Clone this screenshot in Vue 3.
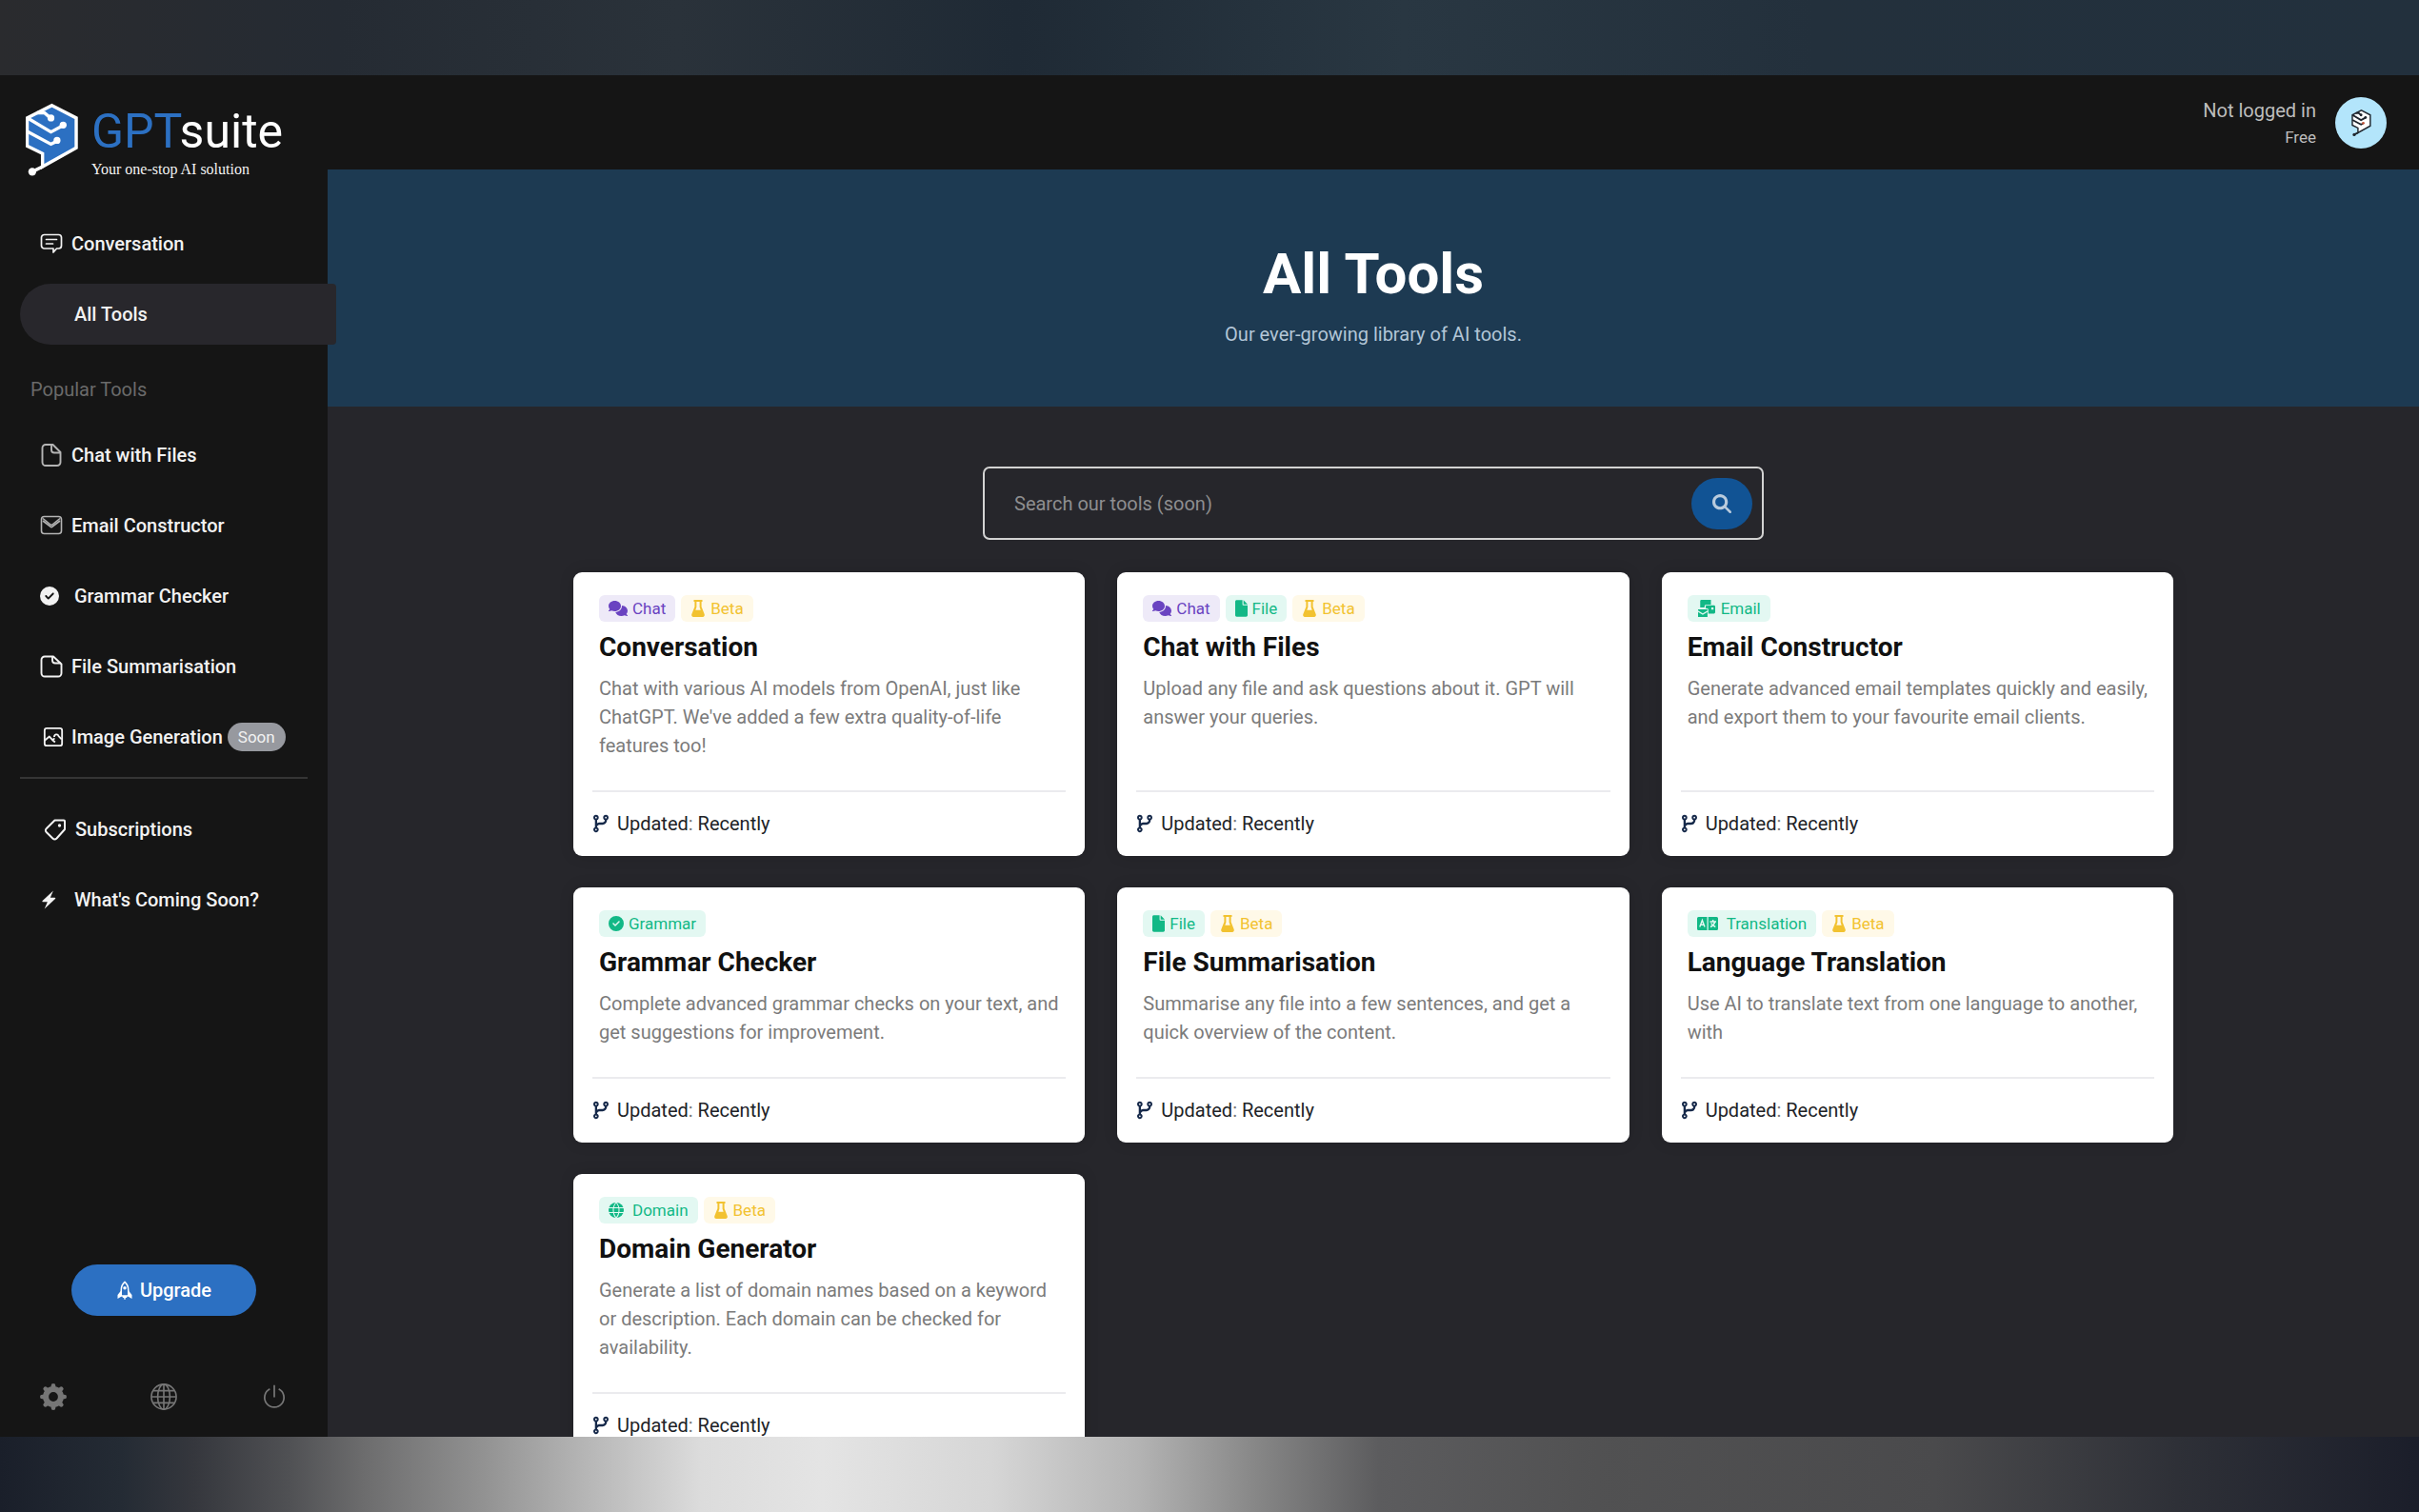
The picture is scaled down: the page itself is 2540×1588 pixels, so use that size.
<script setup>
const icons = {
  chatBubble: {
    box: '0 0 24 24',
    body: '<g fill="none" stroke="currentColor" stroke-width="1.7" stroke-linejoin="round" stroke-linecap="round"><path d="M4.500 2.500h15a3 3 0 0 1 3 3v8.500a3 3 0 0 1-3 3h-2l-3.500 4v-4H4.500a3 3 0 0 1-3-3V5.500a3 3 0 0 1 3-3z"/><path d="M6.500 7.500h11M6.500 12h7"/></g>',
  },
  page: {
    box: '0 0 24 24',
    body: '<g fill="none" stroke="currentColor" stroke-width="1.900" stroke-linejoin="round"><path d="M6 1h7.500l8 8v10.500a3.500 3.500 0 0 1-3.500 3.500H6a3.500 3.500 0 0 1-3.500-3.500v-15A3.500 3.500 0 0 1 6 1z"/><path d="M12 1v5.500a3 3 0 0 0 3 3h6.500"/></g>',
  },
  pageWide: {
    box: '0 0 24 24',
    body: '<g fill="none" stroke="currentColor" stroke-width="1.900" stroke-linejoin="round"><path d="M5 1.500h9l8.500 8V19a3.500 3.500 0 0 1-3.500 3.500H5A3.500 3.500 0 0 1 1.500 19V5A3.500 3.500 0 0 1 5 1.500z"/><path d="M13 1.500v4a3 3 0 0 0 3 3h6"/></g>',
  },
  mail: {
    box: '0 0 24 24',
    body: '<g fill="none" stroke="currentColor" stroke-width="1.600" stroke-linejoin="round"><rect x="1.500" y="2.500" width="21" height="18" rx="3"/><path d="M3 4.500l8 6.500q1 .8 2 0l8-6.500M3 7l8 6.200q1 .8 2 0L21 7"/></g>',
  },
  check: {
    box: '0 0 512 512',
    body: '<path fill="currentColor" d="M256 512A256 256 0 1 0 256 0a256 256 0 1 0 0 512zM369 209L241 337c-9.400 9.400-24.600 9.400-33.900 0l-64-64c-9.400-9.400-9.400-24.600 0-33.900s24.600-9.400 33.900 0l47 47L335 175c9.400-9.400 24.600-9.400 33.900 0s9.400 24.600 0 33.900z"/>',
  },
  image: {
    box: '0 0 24 24',
    body: '<g fill="none" stroke="currentColor" stroke-width="2" stroke-linejoin="round"><rect x="2" y="2" width="20" height="20" rx="2.500"/><path d="M2 16l5.500-4.500 3.500 4 2.500-2"/><path d="M11 15.500l3 2.500M13 12c0-3 4-4 5-1l3.500 3.500"/></g>',
  },
  label: {
    box: '0 0 24 24',
    body: '<path fill="none" stroke="currentColor" stroke-width="2" stroke-linejoin="round" d="M11.500 2.500h9.500a1 1 0 0 1 1 1v8.500L13.500 21.500a3 3 0 0 1-4.200 0L2.700 15a2.600 2.600 0 0 1 0-3.800z"/><circle cx="16.500" cy="8" r="1.700" fill="currentColor"/>',
  },
  bolt: {
    box: '0 0 24 24',
    body: '<path fill="currentColor" d="M15.500.5L2 13.200c-.7.6-.3 1.500.6 1.500h5.600L4.500 23.500 18 10.800c.7-.6.3-1.500-.6-1.500h-5.600z"/>',
  },
  rocket: {
    box: '0 0 24 26',
    body: '<path fill="none" stroke="currentColor" stroke-width="2" stroke-linejoin="round" d="M12 1.500c-4 3.500-5 8-5 11.500v8h10v-8c0-3.500-1-8-5-11.500z"/><path fill="currentColor" d="M6.500 14L2 19.500V25l5-3zM17.500 14l4.500 5.500V25l-5-3zM9 21h6v2.500h-2V26h-2v-2.500H9z"/><circle cx="12" cy="10" r="2.300" fill="currentColor"/>',
  },
  gear: {
    box: '0 0 24 24',
    body: '<circle cx="12" cy="12" r="6.800" fill="none" stroke="currentColor" stroke-width="5.200"/><g stroke="currentColor" stroke-width="4" stroke-linecap="round"><path d="M12 2v2M12 20v2M2 12h2M20 12h2M4.900 4.900l1.500 1.500M17.600 17.600l1.500 1.500M4.900 19.100l1.500-1.500M17.600 6.400l1.500-1.500"/></g>',
  },
  globeLine: {
    box: '0 0 24 24',
    body: '<g fill="none" stroke="currentColor" stroke-width="1.400"><circle cx="12" cy="12" r="11.200"/><ellipse cx="12" cy="12" rx="5.500" ry="11.200"/><path d="M12 1v22M1 12h22M2.600 6.500h18.800M2.600 17.500h18.800"/></g>',
  },
  power: {
    box: '0 0 24 24',
    body: '<path fill="none" stroke="currentColor" stroke-width="1.500" d="M12 1.500v11M8 5a8.700 8.700 0 1 0 8 0"/>',
  },
  search: {
    box: '0 0 512 512',
    body: '<path fill="currentColor" d="M416 208c0 45.900-14.900 88.300-40 122.700L502.600 457.400c12.500 12.500 12.500 32.800 0 45.300s-32.800 12.500-45.300 0L330.700 376c-34.400 25.200-76.800 40-122.700 40C93.100 416 0 322.900 0 208S93.100 0 208 0S416 93.100 416 208zM208 336a128 128 0 1 0 0-256 128 128 0 1 0 0 256z"/>',
  },
  branch: {
    box: '0 0 448 512',
    body: '<path fill="currentColor" d="M80 104a24 24 0 1 0 0-48 24 24 0 1 0 0 48zm80-24c0 32.800-19.700 61-48 73.300v87.800c18.800-10.900 40.700-17.100 64-17.100h96c35.300 0 64-28.700 64-64v-6.700C307.700 141 288 112.800 288 80c0-44.200 35.800-80 80-80s80 35.800 80 80c0 32.800-19.700 61-48 73.300V160c0 70.700-57.300 128-128 128H176c-35.300 0-64 28.700-64 64v6.700c28.300 12.300 48 40.500 48 73.300c0 44.200-35.800 80-80 80s-80-35.800-80-80c0-32.800 19.700-61 48-73.300V352 153.300C19.700 141 0 112.800 0 80C0 35.800 35.800 0 80 0s80 35.800 80 80zm232 0a24 24 0 1 0-48 0 24 24 0 1 0 48 0zM80 456a24 24 0 1 0 0-48 24 24 0 1 0 0 48z"/>',
  },
  comments: {
    box: '0 0 640 512',
    body: '<path fill="currentColor" d="M208 352c114.900 0 208-78.800 208-176S322.900 0 208 0S0 78.800 0 176c0 38.600 14.700 74.300 39.600 103.400c-3.500 9.400-8.700 17.700-14.200 24.700c-4.800 6.200-9.700 11-13.300 14.300c-1.800 1.600-3.300 2.900-4.300 3.700c-.5 .4-.9 .7-1.100 .8l-.2 .2C1 327.200-1.400 334.400 .8 340.900S9.100 352 16 352c21.800 0 43.800-5.600 62.100-12.500c9.200-3.500 17.800-7.400 25.200-11.400C134.100 343.300 169.800 352 208 352zM448 176c0 112.300-99.100 196.900-216.500 207C255.800 457.400 336.400 512 432 512c38.200 0 73.900-8.700 104.700-23.900c7.500 4 16 7.900 25.200 11.400c18.300 6.900 40.300 12.500 62.100 12.500c6.900 0 13.100-4.500 15.200-11.100c2.100-6.600-.2-13.800-5.800-17.900l-.2-.2c-.2-.2-.6-.4-1.100-.8c-1-.8-2.500-2-4.300-3.700c-3.600-3.300-8.500-8.100-13.300-14.300c-5.500-7-10.700-15.400-14.200-24.700c24.900-29 39.600-64.700 39.600-103.400c0-92.800-84.900-168.900-192.600-175.500c.4 5.100 .6 10.300 .6 15.500z"/>',
  },
  flask: {
    box: '0 0 16 20',
    body: '<path fill="currentColor" fill-rule="evenodd" d="M3 0h10v2.200h-1V8l3.400 8.800c.6 1.700-.3 3.200-2 3.200H2.600c-1.700 0-2.600-1.500-2-3.200L4 8V2.200H3zM6.200 2.200V8.500L5 12h6L9.800 8.500V2.200z"/>',
  },
  file: {
    box: '0 0 384 512',
    body: '<path fill="currentColor" d="M0 48C0 20 20 0 48 0H224V128c0 17.700 14.300 32 32 32H384V464c0 28-20 48-48 48H48c-28 0-48-20-48-48V48zm384 80H256V0L384 128z"/>',
  },
  mails: {
    box: '0 0 20 20',
    body: '<path fill="currentColor" d="M4 0h11v5.500H9.500a2 2 0 0 0-2 2v1.500h-5V1.500A1.500 1.500 0 0 1 4 0z"/><path fill="currentColor" fill-rule="evenodd" d="M9 6.500h9.500A1.500 1.500 0 0 1 20 8v6.500a1.500 1.500 0 0 1-1.500 1.500H12v-4.500A1.500 1.500 0 0 0 10.500 10H9zM15.500 9v2.500H18V9z"/><path fill="currentColor" d="M0 11h11v1.500l-5.500 3.200L0 12.500zM0 14.300l5.500 3.200 5.500-3.200V20H0z"/>',
  },
  language: {
    box: '0 0 22 14',
    body: '<path fill="currentColor" fill-rule="evenodd" d="M1.500 0h9v14h-9A1.500 1.500 0 0 1 0 12.500v-11A1.500 1.500 0 0 1 1.500 0zM11.700 0h8.800A1.500 1.500 0 0 1 22 1.500v11a1.500 1.500 0 0 1-1.500 1.500h-8.800z"/><path fill="none" stroke="#e3f8f2" stroke-width="1.400" d="M2.800 10.500l2.600-7 2.600 7M3.800 8.300h3.200M13.500 5h6.500M16.700 3v2M18.700 5c-.6 2.600-2.400 4.600-4.700 5.500M14.700 6.500c.8 1.800 2.400 3.200 4.600 4"/>',
  },
  globe: {
    box: '0 0 20 20',
    body: '<circle cx="10" cy="10" r="10" fill="currentColor"/><path fill="none" stroke="#e3f8f2" stroke-width="1.300" d="M0 7h20M0 13h20M10 0C5 5 5 15 10 20M10 0c5 5 5 15 0 20"/>',
  },
}

const mainNav = [
  { label: 'Conversation', icon: 'chatBubble', kind: 'line' },
  { label: 'All Tools', kind: 'solid', active: true },
]
const popularNav = [
  { label: 'Chat with Files', icon: 'page', kind: 'line soft' },
  { label: 'Email Constructor', icon: 'mail', kind: 'line soft' },
  { label: 'Grammar Checker', icon: 'check', kind: 'solid' },
  { label: 'File Summarisation', icon: 'pageWide', kind: 'line' },
  { label: 'Image Generation', icon: 'image', kind: 'line', badge: 'Soon' },
]
const moreNav = [
  { label: 'Subscriptions', icon: 'label', kind: 'inset' },
  { label: "What's Coming Soon?", icon: 'bolt', kind: 'solid' },
]
const groups = [
  { items: mainNav },
  { title: 'Popular Tools', items: popularNav },
  { divider: true, items: moreNav },
]

const chat = { label: 'Chat', icon: 'comments', tone: 'purple' }
const beta = { label: 'Beta', icon: 'flask', tone: 'yellow' }
const file = { label: 'File', icon: 'file', tone: 'green' }
const tools = [
  { title: 'Conversation', tags: [chat, beta], text: "Chat with various AI models from OpenAI, just like ChatGPT. We've added a few extra quality-of-life features too!" },
  { title: 'Chat with Files', tags: [chat, file, beta], text: 'Upload any file and ask questions about it. GPT will answer your queries.' },
  { title: 'Email Constructor', tags: [{ label: 'Email', icon: 'mails', tone: 'green' }], text: 'Generate advanced email templates quickly and easily, and export them to your favourite email clients.' },
  { title: 'Grammar Checker', tags: [{ label: 'Grammar', icon: 'check', tone: 'green' }], text: 'Complete advanced grammar checks on your text, and get suggestions for improvement.' },
  { title: 'File Summarisation', tags: [file, beta], text: 'Summarise any file into a few sentences, and get a quick overview of the content.' },
  { title: 'Language Translation', tags: [{ label: 'Translation', icon: 'language', tone: 'green' }, beta], text: 'Use AI to translate text from one language to another, with' },
  { title: 'Domain Generator', tags: [{ label: 'Domain', icon: 'globe', tone: 'green' }, beta], text: 'Generate a list of domain names based on a keyword or description. Each domain can be checked for availability.' },
]
</script>

<template>
  <div class="desktop">
    <div class="app">
      <aside class="sidebar">
        <a class="brand" href="#">
          <svg class="brand-mark" viewBox="0 0 56 78" aria-hidden="true">
            <path d="M28 2.500L54 16v32L18 68V54L1.500 46V16z" fill="#2c70c2" stroke="#fff" stroke-width="3.500" />
            <g fill="none" stroke="#fff" stroke-width="3.500">
              <path d="M18 68L7 73.500M12 10.500l8 0 7 6M2 16l25 15 13-7M2 30.500l25 13.500 6-3" />
            </g>
            <g fill="#fff">
              <circle cx="27" cy="16" r="3.700" /><circle cx="40" cy="23.500" r="3.700" />
              <circle cx="33.500" cy="40" r="3.700" /><circle cx="7" cy="73.500" r="4.200" />
            </g>
          </svg>
          <span class="brand-text">
            <span class="brand-name"><b>GPT</b>suite</span>
            <span class="brand-line">Your one-stop AI solution</span>
          </span>
        </a>
        <nav>
          <template v-for="(group, g) in groups" :key="g">
            <h2 v-if="group.title" class="nav-title">{{ group.title }}</h2>
            <hr v-if="group.divider" class="nav-divider" />
            <a v-for="item in group.items" :key="item.label" href="#" class="nav-item" :class="[item.kind, { active: item.active }]">
              <span class="nav-icon" :class="item.icon">
                <svg v-if="item.icon" :viewBox="icons[item.icon].box" aria-hidden="true" v-html="icons[item.icon].body"></svg>
              </span>
              {{ item.label }}
              <span v-if="item.badge" class="badge">{{ item.badge }}</span>
            </a>
          </template>
        </nav>
        <div class="sidebar-foot">
          <button class="upgrade" type="button">
            <svg :viewBox="icons.rocket.box" aria-hidden="true" v-html="icons.rocket.body"></svg>
            Upgrade
          </button>
          <div class="quick">
            <button type="button" aria-label="Settings"><svg :viewBox="icons.gear.box" v-html="icons.gear.body"></svg></button>
            <button type="button" aria-label="Language"><svg :viewBox="icons.globeLine.box" v-html="icons.globeLine.body"></svg></button>
            <button type="button" aria-label="Log out"><svg :viewBox="icons.power.box" v-html="icons.power.body"></svg></button>
          </div>
        </div>
      </aside>

      <div class="content">
        <header class="topbar">
          <div class="user">
            <span class="user-name">Not logged in</span>
            <span class="user-plan">Free</span>
          </div>
          <button class="avatar" type="button" aria-label="Account">
            <svg viewBox="0 0 56 78" aria-hidden="true">
              <path d="M28 2.500L54 16v32L18 68V54L1.500 46V16z" fill="#fff" stroke="#20262e" stroke-width="4" />
              <path d="M18 68L7 73.500M12 10.500h8l7 6M2 16l25 15 13-7M2 30.500l25 13.500 6-3" fill="none" stroke="#20262e" stroke-width="5" />
              <g fill="#20262e">
                <circle cx="27" cy="16" r="4" /><circle cx="40" cy="23.500" r="4" />
                <circle cx="33.500" cy="40" r="4" fill="#c0563c" /><circle cx="7" cy="73.500" r="4.500" />
              </g>
            </svg>
          </button>
        </header>
        <main>
          <section class="hero">
            <h1>All Tools</h1>
            <p>Our ever-growing library of AI tools.</p>
          </section>
          <form class="search" @submit.prevent>
            <input type="text" placeholder="Search our tools (soon)" aria-label="Search our tools" />
            <button type="submit" aria-label="Search">
              <svg :viewBox="icons.search.box" v-html="icons.search.body"></svg>
            </button>
          </form>
          <div class="grid">
            <article v-for="tool in tools" :key="tool.title" class="card">
              <div class="card-body">
                <div class="tags">
                  <span v-for="tag in tool.tags" :key="tag.label" class="tag" :class="[tag.tone, tag.icon]">
                    <svg :viewBox="icons[tag.icon].box" aria-hidden="true" v-html="icons[tag.icon].body"></svg>{{ tag.label }}
                  </span>
                </div>
                <h3>{{ tool.title }}</h3>
                <p>{{ tool.text }}</p>
              </div>
              <footer>
                <svg :viewBox="icons.branch.box" aria-hidden="true" v-html="icons.branch.body"></svg>
                <span>Updated<i>:</i> Recently</span>
              </footer>
            </article>
          </div>
        </main>
      </div>
    </div>
  </div>
</template>

<style>
body {
  margin: 0;
}
</style>

<style scoped>
* {
  box-sizing: border-box;
}
h1, h2, h3, p {
  margin: 0;
}
a {
  color: inherit;
  text-decoration: none;
}
button {
  border: 0;
  padding: 0;
  font: inherit;
  color: inherit;
  background: none;
  cursor: pointer;
}
svg {
  display: block;
  flex: none;
}
.desktop {
  height: 100vh;
  padding: 79px 0;
  font-family: Roboto, "Liberation Sans", sans-serif;
  font-size: 20px;
  background:
    linear-gradient(90deg, #2a2b2e 0%, #252b33 14%, #2a323a 28%, #1f2a35 42%, #293742 58%, #23303c 75%, #22303d 100%) top / 100% 79px no-repeat,
    linear-gradient(90deg, #1a1f2a 0%, #242b34 5%, #35373d 8%, #505154 12%, #6c6c6d 15%, #929292 20%, #b4b4b4 24%, #dcdcdc 29%, #e4e4e4 34%, #d6d6d6 41%, #b4b4b4 47%, #868686 52%, #5c5c5e 57%, #515152 66%, #4a4a4c 80%, #2e3037 90%, #1b1e2a 100%) bottom / 100% 79px no-repeat;
}
.app {
  display: flex;
  height: 100%;
  overflow: hidden;
  background: #26262b;
}
.sidebar {
  position: relative;
  z-index: 1;
  flex: none;
  display: flex;
  flex-direction: column;
  width: 344px;
  background: #151515;
  color: #f2f2f2;
}
.brand {
  display: flex;
  gap: 14px;
  height: 145px;
  padding: 29px 0 0 27px;
}
.brand-mark {
  width: 55px;
  height: 77px;
}
.brand-text {
  display: flex;
  flex-direction: column;
}
.brand-name {
  color: #fff;
  font-size: 50px;
  line-height: 60px;
}
.brand-name b {
  font-weight: 400;
  color: #2c70c2;
}
.brand-line {
  font-family: "Liberation Serif", serif;
  font-size: 16px;
  line-height: 20px;
}
.nav-item {
  display: flex;
  align-items: center;
  height: 64px;
  margin: 0 0 10px 21px;
  padding-left: 21px;
  font-weight: 500;
}
.nav-item.active {
  margin-right: -9px;
  border-radius: 32px 4px 4px 32px;
  background: #28272c;
}
.nav-icon {
  flex: none;
  display: flex;
  width: 33px;
}
.nav-icon svg {
  width: 24px;
  height: 24px;
}
.solid .nav-icon {
  width: 36px;
}
.solid .nav-icon svg {
  width: 20px;
  height: 20px;
}
.soft .nav-icon {
  color: #b4b4b4;
}
.nav-icon.image {
  padding-left: 3px;
}
.nav-icon.image svg {
  width: 22px;
}
.inset .nav-icon {
  width: 37px;
  padding-left: 4px;
}
.nav-icon.bolt {
  padding-left: 1px;
}
.nav-title {
  margin-left: 32px;
  font-size: 20px;
  font-weight: 400;
  line-height: 74px;
  color: #6a6a6a;
}
.nav-divider {
  margin: 0 21px 21px;
  border: 0;
  border-top: 2px solid #353535;
}
.badge {
  margin-left: 5px;
  padding: 0 11px;
  border-radius: 15px;
  background: #97999f;
  font-size: 17px;
  font-weight: 400;
  line-height: 30px;
}
.sidebar-foot {
  margin-top: auto;
  padding: 0 42px 28px;
}
.upgrade {
  display: flex;
  align-items: center;
  justify-content: center;
  gap: 7px;
  width: 194px;
  height: 54px;
  margin: 0 auto 71px;
  border-radius: 27px;
  background: #2c70c2;
  color: #fff;
  font-weight: 500;
}
.upgrade svg {
  width: 18px;
  height: 22px;
}
.quick {
  display: flex;
  justify-content: space-between;
  color: #767676;
}
.quick svg {
  width: 28px;
  height: 28px;
}
.content {
  flex: 1;
  min-width: 0;
}
.topbar {
  display: flex;
  align-items: center;
  justify-content: flex-end;
  gap: 20px;
  height: 99px;
  padding-right: 34px;
  background: #151515;
  color: #bdbdbd;
}
.user {
  display: flex;
  flex-direction: column;
  align-items: flex-end;
  padding-top: 2px;
  line-height: 28px;
}
.user-plan {
  font-size: 17px;
}
.avatar {
  display: flex;
  align-items: center;
  justify-content: center;
  width: 54px;
  height: 54px;
  border-radius: 50%;
  background: #b3e5fb;
}
.avatar svg {
  width: 21px;
  height: 28px;
}
.hero {
  display: flex;
  flex-direction: column;
  align-items: center;
  height: 249px;
  padding-top: 74px;
  background: #1d3a52;
  color: #b3c6d7;
}
.hero h1 {
  color: #fff;
  font-size: 60px;
  font-weight: 700;
  line-height: 72px;
}
.hero p {
  margin-top: 12px;
  line-height: 30px;
}
.search {
  display: flex;
  align-items: center;
  width: 820px;
  max-width: 90%;
  height: 77px;
  margin: 63px auto 34px;
  padding: 0 10px 0 31px;
  border: 2px solid #d2d2d2;
  border-radius: 7px;
}
.search input {
  flex: 1;
  min-width: 0;
  height: 100%;
  padding: 0;
  border: 0;
  outline: 0;
  background: none;
  color: #fff;
  font: inherit;
}
.search input::placeholder {
  color: #8e8e90;
  opacity: 1;
}
.search button {
  display: flex;
  align-items: center;
  justify-content: center;
  width: 64px;
  height: 54px;
  border-radius: 27px;
  background: #115394;
  color: #b9cbdd;
}
.search svg {
  width: 20px;
  height: 20px;
}
.grid {
  display: grid;
  grid-template-columns: repeat(3, 1fr);
  gap: 33px 34px;
  max-width: 1680px;
  margin: 0 auto;
}
.card {
  display: flex;
  flex-direction: column;
  padding: 24px 20px 0;
  border-radius: 9px;
  background: #fff;
  box-shadow: 0 0 16px rgba(0, 0, 0, 0.12);
}
.card-body {
  flex: 1;
  padding: 0 7px 32px;
}
.tags {
  display: flex;
  gap: 6px;
}
.tag {
  display: flex;
  align-items: center;
  gap: 5px;
  height: 28px;
  padding: 0 10px 1px;
  border-radius: 6px;
  font-size: 17px;
}
.tag svg {
  width: 16px;
  height: 18px;
}
.tag.comments svg,
.tag.mails svg {
  width: 20px;
}
.tag.file svg {
  width: 13px;
}
.tag.globe,
.tag.language {
  gap: 9px;
}
.tag.language svg {
  width: 22px;
}
.purple {
  background: #eeeaf8;
  color: #6a43c1;
}
.yellow {
  background: #fff9e8;
  color: #f2c230;
}
.green {
  background: #e3f8f2;
  color: #12b886;
}
.card h3 {
  margin: 9px 0 10px;
  color: #111;
  font-size: 28px;
  font-weight: 700;
  line-height: 36px;
}
.card p {
  color: #7b7b7b;
  line-height: 30px;
}
.card footer {
  display: flex;
  align-items: center;
  gap: 9px;
  height: 69px;
  padding: 0 0 2px 1px;
  border-top: 2px solid #ebebee;
  color: #212327;
  font-size: 20px;
}
.card footer svg {
  width: 16px;
  height: 22px;
  color: #16294a;
}
.card footer i {
  font-style: normal;
  color: #777;
}
</style>
